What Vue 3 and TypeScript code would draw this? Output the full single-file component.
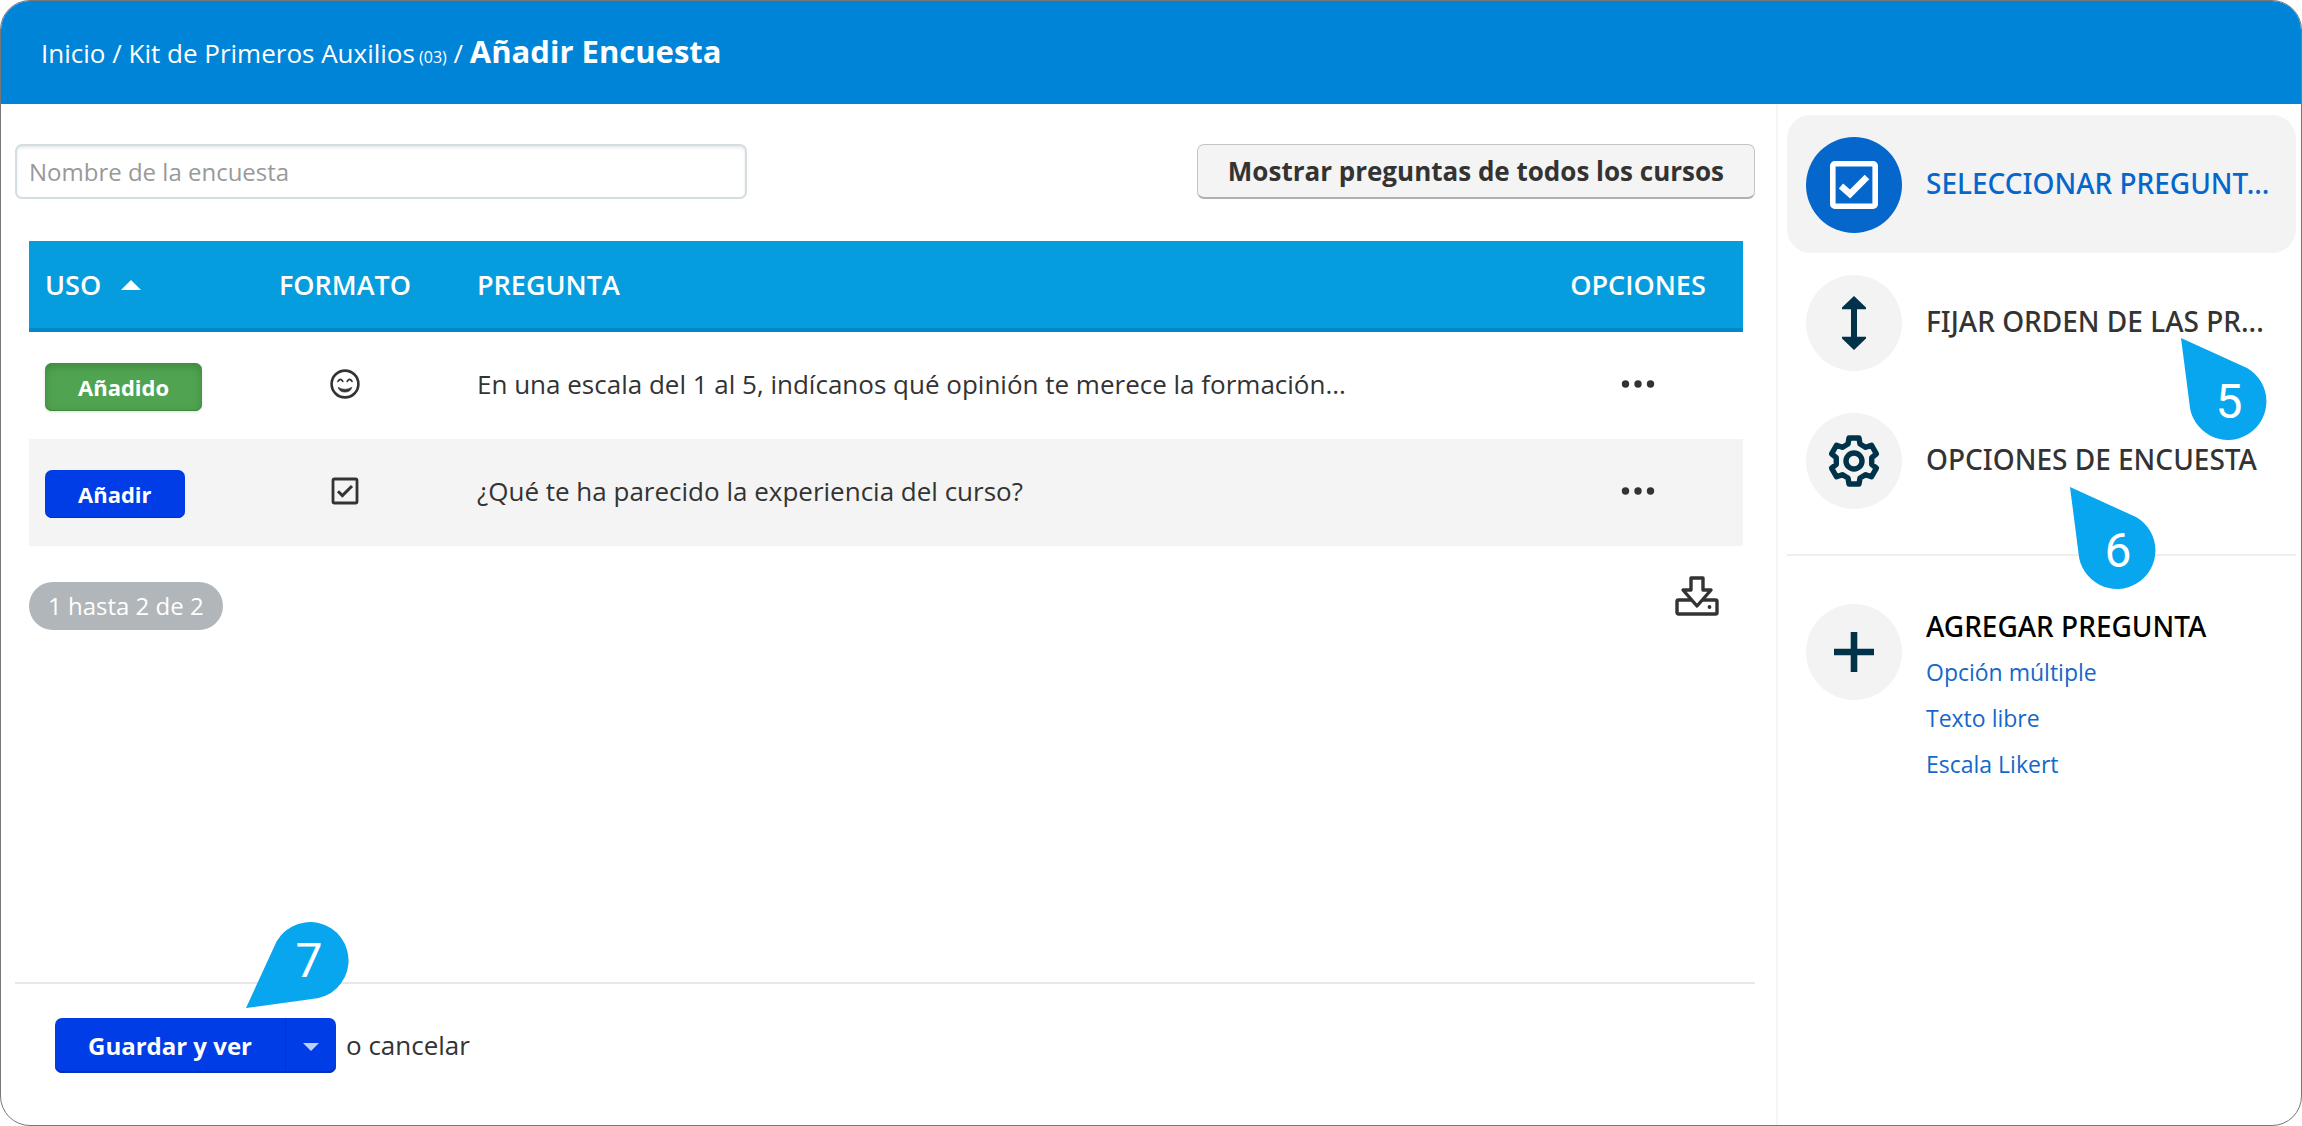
<script setup lang="ts">
import { ref } from 'vue'

interface Question {
  id: number
  added: boolean
  format: 'likert' | 'choice'
  text: string
}

const surveyName = ref('')

const questions = ref<Question[]>([
  {
    id: 1,
    added: true,
    format: 'likert',
    text: 'En una escala del 1 al 5, indícanos qué opinión te merece la formación...',
  },
  { id: 2, added: false, format: 'choice', text: '¿Qué te ha parecido la experiencia del curso?' },
])

const newQuestionTypes: string[] = ['Opción múltiple', 'Texto libre', 'Escala Likert']

// Outline of a six-toothed gear centred on the origin.
function gearOutline(): string {
  const tooth = [[-6, -17], [-5, -23], [5, -23], [6, -17]]
  const points: string[] = []
  for (let k = 0; k < 6; k++) {
    const a = (k * Math.PI) / 3
    for (const [x, y] of tooth) {
      const px = x * Math.cos(a) - y * Math.sin(a)
      const py = x * Math.sin(a) + y * Math.cos(a)
      points.push(`${px.toFixed(2)},${py.toFixed(2)}`)
    }
  }
  return points.join(' ')
}
const gearPoints = gearOutline()
</script>

<template>
  <div class="page">
    <header class="topbar">
      <nav class="crumbs" aria-label="Ruta">
        <a href="#">Inicio</a> / <a href="#">Kit de Primeros Auxilios<small>&#32;(03)</small></a> / <h1>Añadir Encuesta</h1>
      </nav>
    </header>

    <div class="body">
      <main class="content">
        <div class="filters">
          <input
            v-model="surveyName"
            class="name"
            type="text"
            placeholder="Nombre de la encuesta"
            aria-label="Nombre de la encuesta"
          />
          <button type="button" class="btn-light">Mostrar preguntas de todos los cursos</button>
        </div>

        <table class="questions">
          <colgroup>
            <col class="col-use" />
            <col class="col-format" />
            <col />
            <col class="col-options" />
          </colgroup>
          <thead>
            <tr>
              <th>
                <span class="sort">USO <i class="sort-up"></i></span>
              </th>
              <th class="center">FORMATO</th>
              <th>PREGUNTA</th>
              <th class="center">OPCIONES</th>
            </tr>
          </thead>
          <tbody>
            <tr v-for="q in questions" :key="q.id">
              <td class="use">
                <button type="button" class="tag" :class="{ added: q.added }">
                  {{ q.added ? 'Añadido' : 'Añadir' }}
                </button>
              </td>
              <td class="center">
                <svg v-if="q.format === 'likert'" class="icon" width="30" height="30" viewBox="0 0 30 30">
                  <circle cx="15" cy="15" r="13.4" fill="none" stroke="#333" stroke-width="2.6" />
                  <path d="M8 12.4q2.4-4 4.800 0M17.200 12.400q2.400-4 4.800 0" fill="none" stroke="#333" stroke-width="1.7" stroke-linecap="round" />
                  <path d="M8.200 18.400q6.800 4 13.600 0q-1.600 4.600-6.800 4.600t-6.800-4.600z" fill="#333" stroke="#333" stroke-width="0.8" stroke-linejoin="round" />
                </svg>
                <svg v-else class="icon" width="28" height="28" viewBox="0 0 28 28">
                  <rect x="2" y="2" width="24" height="24" rx="1.5" fill="none" stroke="#333" stroke-width="2.8" />
                  <path d="M7 14.2l4.4 4.4L21 9" fill="none" stroke="#333" stroke-width="3" />
                </svg>
              </td>
              <td class="text">{{ q.text }}</td>
              <td class="center">
                <button type="button" class="plain" aria-label="Opciones">
                  <svg class="icon" width="34" height="8" viewBox="0 0 34 8" fill="#333">
                    <circle cx="4.5" cy="4" r="3.7" />
                    <circle cx="17" cy="4" r="3.7" />
                    <circle cx="29.5" cy="4" r="3.7" />
                  </svg>
                </button>
              </td>
            </tr>
          </tbody>
        </table>

        <div class="table-foot">
          <span class="pill">1 hasta 2 de 2</span>
          <button type="button" class="plain download" aria-label="Descargar">
            <svg class="icon" width="44" height="40" viewBox="0 0 44 40" fill="#fff" stroke="#333" stroke-width="3.4" stroke-linejoin="round">
              <rect x="2" y="24" width="40" height="14" rx="1.5" />
              <path d="M16 2h12v12h8L22 30 8 14h8z" />
              <circle cx="34.5" cy="31" r="1.9" fill="#333" stroke="none" />
            </svg>
          </button>
        </div>

        <footer class="actions">
          <div class="split">
            <button type="button" class="save">Guardar y ver</button>
            <button type="button" class="more" aria-label="Más opciones"><i></i></button>
            <svg class="pin pin-7" width="104" height="88" viewBox="0 0 104 88">
              <path d="M0 86L28 25A38.5 38.5 0 1 1 66 77z" />
              <text x="63" y="55">7</text>
            </svg>
          </div>
          <span>o <a href="#">cancelar</a></span>
        </footer>
      </main>

      <aside class="side">
        <a href="#" class="step active">
          <span class="disc">
            <svg width="48" height="48" viewBox="0 0 48 48" fill="none" stroke="#fff">
              <rect x="2.8" y="2.8" width="42.4" height="42.4" rx="2" stroke-width="5.6" />
              <path d="M11 25l9 8 17-17" stroke-width="6.5" />
            </svg>
          </span>
          <span class="label">SELECCIONAR PREGUNT...</span>
        </a>
        <a href="#" class="step">
          <span class="disc">
            <svg width="26" height="56" viewBox="0 0 26 56" fill="#003349">
              <path d="M13 1L25 12.5v1.7h-9v27.6h9v1.7L13 55 1 43.5v-1.7h9V14.2H1v-1.7z" />
            </svg>
          </span>
          <span class="label">FIJAR ORDEN DE LAS PR...</span>
          <svg class="pin pin-5" width="88" height="104" viewBox="0 0 88 104">
            <path d="M0 0L66 30A38.5 38.5 0 1 1 8.5 66z" />
            <text x="48" y="80">5</text>
          </svg>
        </a>
        <a href="#" class="step">
          <span class="disc">
            <svg width="54" height="54" viewBox="-27 -27 54 54" fill="none" stroke="#003349" stroke-linejoin="round">
              <polygon :points="gearPoints" stroke-width="5.4" />
              <circle r="8" stroke-width="5.4" />
            </svg>
          </span>
          <span class="label">OPCIONES DE ENCUESTA</span>
          <svg class="pin pin-6" width="88" height="104" viewBox="0 0 88 104">
            <path d="M0 0L66 30A38.5 38.5 0 1 1 8.5 66z" />
            <text x="48" y="80">6</text>
          </svg>
        </a>

        <section class="add">
          <span class="disc">
            <svg width="42" height="42" viewBox="0 0 42 42" fill="none" stroke="#003349" stroke-width="6.6">
              <path d="M21 1v40M1 21h40" />
            </svg>
          </span>
          <div>
            <h2>AGREGAR PREGUNTA</h2>
            <ul>
              <li v-for="t in newQuestionTypes" :key="t"><a href="#">{{ t }}</a></li>
            </ul>
          </div>
        </section>
      </aside>
    </div>
  </div>
</template>

<style>
body {
  margin: 0;
  background: #fff;
}
</style>

<style scoped>
.page,
.page * {
  box-sizing: border-box;
}
.page {
  display: flex;
  flex-direction: column;
  min-height: 100vh;
  overflow: hidden;
  border: 1px solid #777;
  border-radius: 30px;
  color: #333;
  font: 26px/40px "Open Sans", "Noto Sans", sans-serif;
}
a {
  color: inherit;
  text-decoration: none;
}
button,
input {
  margin: 0;
  font-family: inherit;
}
button {
  cursor: pointer;
}
.topbar {
  display: flex;
  align-items: center;
  height: 103px;
  padding: 2px 40px 0;
  background: #0084d8;
  color: #fff;
}
.crumbs small {
  font-size: 16px;
}
.crumbs h1 {
  display: inline;
  margin: 0;
  font-size: 31px;
  font-weight: 700;
}
.body {
  display: flex;
  flex: 1;
}
.content {
  display: flex;
  flex: 1;
  flex-direction: column;
  min-width: 0;
  padding: 40px 21px 0 14px;
}
.filters {
  display: flex;
  justify-content: space-between;
}
.name {
  width: 732px;
  height: 55px;
  padding: 0 12px;
  border: 2px solid #d3dde2;
  border-radius: 7px;
  box-shadow: inset 0 2px 3px #e9e9e9;
  color: #333;
  font-size: 24px;
}
.name::placeholder {
  color: #999;
  opacity: 1;
}
.btn-light {
  height: 55px;
  padding: 0 30px;
  border: 1px solid #c4c4c4;
  border-bottom: 2px solid #b0b0b0;
  border-radius: 7px;
  background: #f4f4f4;
  color: #333;
  font-size: 26px;
  font-weight: 700;
}
.questions {
  width: calc(100% - 26px);
  margin: 42px 12px 0 14px;
  border-collapse: collapse;
  table-layout: fixed;
}
.col-use {
  width: 200px;
}
.col-format {
  width: 232px;
}
.col-options {
  width: 210px;
}
th {
  height: 91px;
  padding: 0 16px 4px;
  background: #059ddd;
  box-shadow: inset 0 -4px #0089c6;
  color: #fff;
  font-size: 27px;
  font-weight: 600;
  text-align: left;
}
td {
  height: 107px;
  padding: 0 16px 4px;
}
td.use {
  padding: 2px 16px 0;
}
tbody tr:nth-child(even) {
  background: #f4f4f4;
}
th.center,
td.center {
  text-align: center;
}
.sort {
  display: flex;
  align-items: center;
  gap: 20px;
}
.sort-up {
  border: 10px solid transparent;
  border-top: 0;
  border-bottom-color: #fff;
}
.icon {
  display: block;
  margin: 0 auto;
}
.text {
  overflow: hidden;
  text-overflow: ellipsis;
  white-space: nowrap;
}
.plain {
  display: block;
  margin: 0 auto;
  padding: 0;
  border: 0;
  background: none;
}
.plain.download {
  margin: 0;
}
.tag {
  display: block;
  height: 48px;
  padding: 0 33px;
  border: 0;
  border-radius: 7px;
  background: #003de6;
  box-shadow: inset 0 -1px #0030c0;
  color: #fff;
  font-size: 22px;
  font-weight: 700;
}
.tag.added {
  background: #50a350;
  box-shadow: inset 0 3px 8px #3e863e, inset 0 -1px #3d8a3d, 0 1px 3px #ddd;
}
.table-foot {
  display: flex;
  align-items: flex-start;
  justify-content: space-between;
  margin: 30px 36px 40px 14px;
}
.pill {
  height: 48px;
  margin-top: 6px;
  padding: 0 19px;
  border-radius: 24px;
  background: #b0b6b9;
  color: #fff;
  font-size: 24px;
  line-height: 48px;
}
.actions {
  display: flex;
  gap: 10px;
  height: 143px;
  margin-top: auto;
  padding: 34px 40px 0;
  border-top: 2px solid #e8e8e8;
  line-height: 55px;
}
.split {
  position: relative;
  display: flex;
  height: 55px;
}
.save,
.more {
  border: 0;
  background: #003de6;
  box-shadow: inset 0 -2px #0030c0;
  color: #fff;
}
.save {
  padding: 0 33px;
  border-right: 1px solid #0035c8;
  border-radius: 7px 0 0 7px;
  font-size: 24px;
  font-weight: 700;
}
.more {
  display: flex;
  align-items: center;
  justify-content: center;
  width: 50px;
  padding: 3px 0 0;
  border-radius: 0 7px 7px 0;
}
.more i {
  border: 8px solid transparent;
  border-top-color: #bfcff9;
  border-bottom: 0;
}
.side {
  width: 525px;
  padding: 11px 5px 0 9px;
  border-left: 2px solid #f5f5f5;
}
.step {
  position: relative;
  display: flex;
  align-items: center;
  gap: 24px;
  height: 138px;
  padding: 2px 0 0 19px;
  border-radius: 24px;
  font: 500 28px/40px "Noto Sans", sans-serif;
  white-space: nowrap;
}
.step.active {
  background: #f3f3f3;
  color: #0567cb;
}
.label {
  padding-bottom: 4px;
}
.disc {
  display: flex;
  flex: none;
  align-items: center;
  justify-content: center;
  width: 96px;
  height: 96px;
  border-radius: 50%;
  background: #f3f3f3;
}
.active .disc {
  background: #0567cb;
}
.add {
  display: flex;
  gap: 24px;
  margin-top: 25px;
  padding: 48px 0 0 19px;
  border-top: 2px solid #eee;
}
.add h2 {
  margin: 0;
  color: #000;
  font: 500 28px/45px "Noto Sans", sans-serif;
}
.add ul {
  margin: 0;
  padding: 0;
  list-style: none;
  color: #1568c8;
  font-size: 23px;
  line-height: 46px;
}
.pin {
  position: absolute;
  z-index: 1;
  fill: #08a6ef;
}
.pin text {
  fill: #fff;
  font: 48px Roboto, sans-serif;
  text-anchor: middle;
}
.pin-5 {
  top: 85px;
  left: 394px;
}
.pin-6 {
  top: 96px;
  left: 283px;
}
.pin-7 {
  top: -96px;
  left: 191px;
}
</style>
